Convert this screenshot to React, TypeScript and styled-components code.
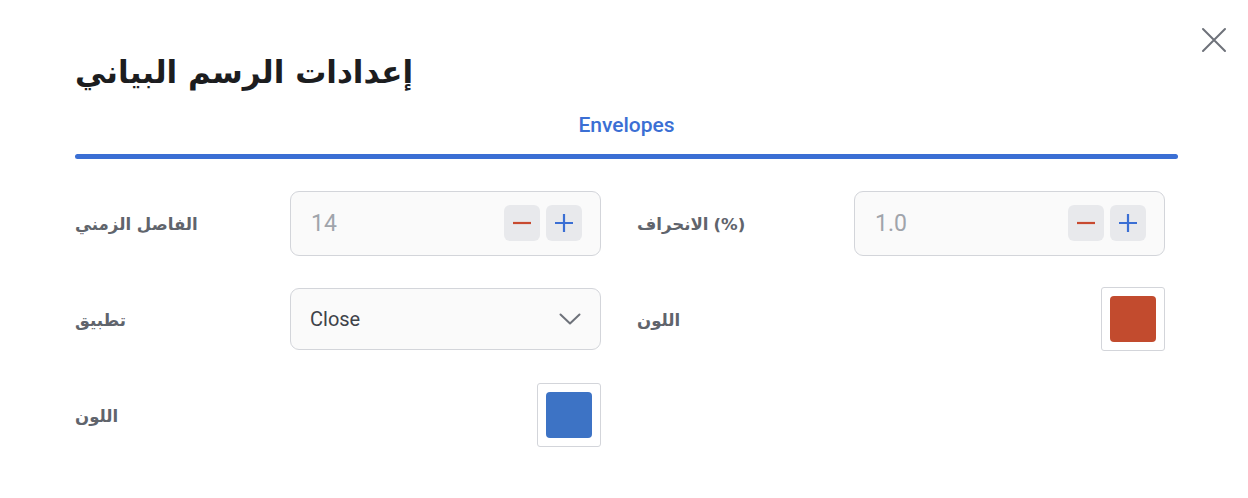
import * as React from 'react';
import styled, { createGlobalStyle } from 'styled-components';

const GlobalStyle = createGlobalStyle`
  html, body {
    margin: 0;
    padding: 0;
    background: #ffffff;
    font-family: Roboto, "DejaVu Sans", sans-serif;
  }
`;

const Dialog = styled.div`
  position: relative;
  box-sizing: border-box;
  width: 1248px;
  height: 498px;
  padding: 44px 70px 0 75px;
  background: #ffffff;
`;

const CloseButton = styled.button`
  position: absolute;
  top: 26px;
  right: 20px;
  width: 28px;
  height: 28px;
  padding: 0;
  border: none;
  background: none;
  cursor: pointer;
  display: flex;
  align-items: center;
  justify-content: center;
`;

const Title = styled.h2`
  margin: 0;
  height: 56px;
  display: flex;
  align-items: center;
  font-family: "DejaVu Sans", sans-serif;
  font-size: 31px;
  font-weight: 700;
  color: #1c1d1f;
`;

const Tabs = styled.div`
  display: flex;
  flex-direction: column;
  align-items: center;
  margin-top: 10px;
`;

const TabLabel = styled.div`
  font-family: Roboto, sans-serif;
  font-size: 21px;
  font-weight: 500;
  color: #3b6fd4;
  height: 30px;
  line-height: 30px;
`;

const TabBar = styled.div`
  width: 100%;
  height: 5px;
  margin-top: 14px;
  border-radius: 3px;
  background: #3b6fd4;
`;

const FieldGrid = styled.div`
  display: grid;
  grid-template-columns: 526px 528px;
  grid-auto-rows: 64px;
  column-gap: 36px;
  row-gap: 32px;
  margin-top: 32px;
`;

const Field = styled.div`
  display: flex;
  align-items: center;
  justify-content: space-between;
`;

const Label = styled.span`
  display: flex;
  gap: 5px;
  direction: ltr;
  font-family: "DejaVu Sans", sans-serif;
  font-size: 16.6px;
  font-weight: 700;
  color: #60646c;
  padding-top: 2px;
`;

const Stepper = styled.div`
  box-sizing: border-box;
  width: 311px;
  height: 65px;
  display: flex;
  align-items: center;
  gap: 6px;
  padding: 0 18px 0 20px;
  border: 1px solid #d3d5da;
  border-radius: 9px;
  background: #fafafa;
`;

const StepValue = styled.span`
  flex: 1;
  font-family: Roboto, sans-serif;
  font-size: 23px;
  color: #a0a4ab;
`;

const StepButton = styled.button`
  width: 36px;
  height: 36px;
  padding: 0;
  border: none;
  border-radius: 6px;
  background: #e8e9ec;
  display: flex;
  align-items: center;
  justify-content: center;
  cursor: pointer;
`;

const Select = styled.div`
  box-sizing: border-box;
  width: 311px;
  height: 62px;
  display: flex;
  align-items: center;
  justify-content: space-between;
  padding: 0 19px 0 19px;
  border: 1px solid #d3d5da;
  border-radius: 9px;
  background: #fafafa;
  font-family: Roboto, sans-serif;
  font-size: 20px;
  color: #3e4249;
`;

const Swatch = styled.div<{ $color: string }>`
  box-sizing: border-box;
  width: 64px;
  height: 64px;
  padding: 8px;
  border: 1px solid #d3d5da;
  border-radius: 3px;
  background: #ffffff;

  &::after {
    content: '';
    display: block;
    width: 100%;
    height: 100%;
    border-radius: 4px;
    background: ${p => p.$color};
  }
`;

const MinusIcon = () => (
  <svg width="20" height="20" viewBox="0 0 20 20">
    <path d="M1 10h18" stroke="#c84a30" strokeWidth="2.2" />
  </svg>
);

const PlusIcon = () => (
  <svg width="20" height="20" viewBox="0 0 20 20">
    <path d="M1 10h18M10 1v18" stroke="#3b6fd4" strokeWidth="2.2" />
  </svg>
);

const NumberField: React.FC<{ value: string }> = ({ value }) => (
  <Stepper>
    <StepValue>{value}</StepValue>
    <StepButton aria-label="decrease">
      <MinusIcon />
    </StepButton>
    <StepButton aria-label="increase">
      <PlusIcon />
    </StepButton>
  </Stepper>
);

export default function App() {
  return (
    <>
      <GlobalStyle />
      <Dialog>
        <CloseButton aria-label="close">
          <svg width="26" height="26" viewBox="0 0 26 26">
            <path d="M2 2l22 22M24 2L2 24" stroke="#6e727a" strokeWidth="2" strokeLinecap="round" />
          </svg>
        </CloseButton>
        <Title>إعدادات الرسم البياني</Title>
        <Tabs>
          <TabLabel>Envelopes</TabLabel>
          <TabBar />
        </Tabs>
        <FieldGrid>
          <Field>
            <Label>الفاصل الزمني</Label>
            <NumberField value="14" />
          </Field>
          <Field>
            <Label>
              <span>{'الانحراف'}</span>
              <span>{'(%)'}</span>
            </Label>
            <NumberField value="1.0" />
          </Field>
          <Field>
            <Label>تطبيق</Label>
            <Select>
              <span>Close</span>
              <svg width="22" height="12" viewBox="0 0 22 12">
                <path d="M1.5 1.5l9.5 9 9.5-9" fill="none" stroke="#6e727a" strokeWidth="2" strokeLinecap="round" strokeLinejoin="round" />
              </svg>
            </Select>
          </Field>
          <Field>
            <Label>اللون</Label>
            <Swatch $color="#c24b2e" />
          </Field>
          <Field>
            <Label>اللون</Label>
            <Swatch $color="#3d73c5" />
          </Field>
        </FieldGrid>
      </Dialog>
    </>
  );
}
